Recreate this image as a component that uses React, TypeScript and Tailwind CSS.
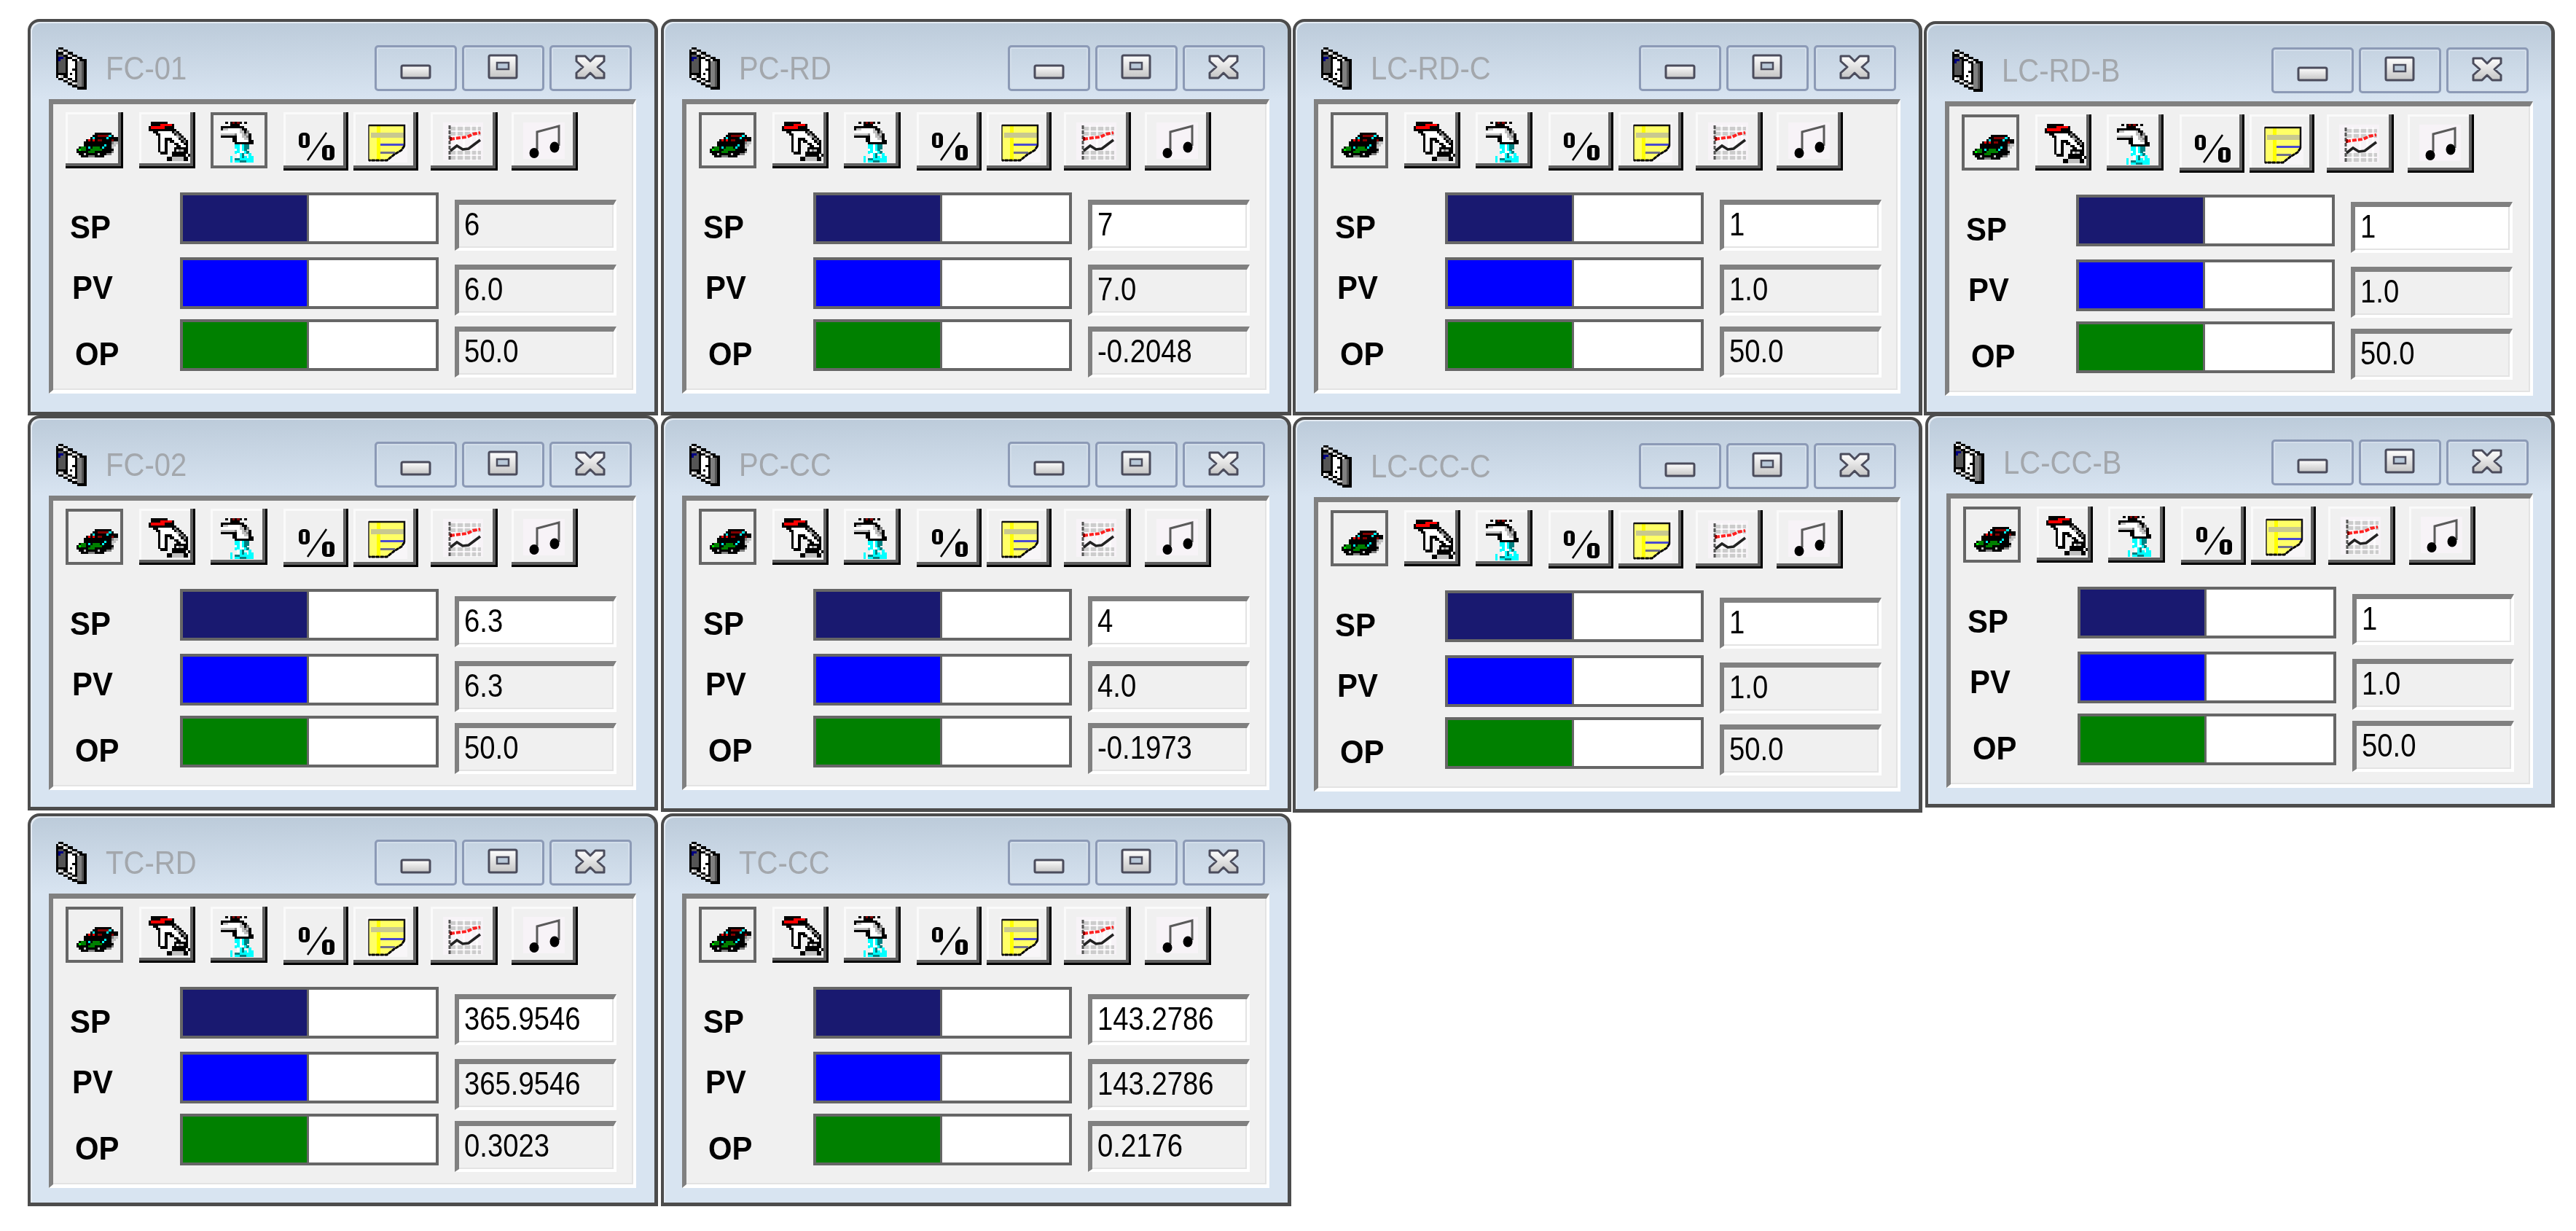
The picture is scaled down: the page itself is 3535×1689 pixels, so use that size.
import React from "react";

const colors: Record<string, string> = {
  k: "#000000", r: "#ff0000", d: "#800000", c: "#00ffff", g: "#008000", G: "#00ff00",
  w: "#ffffff", s: "#c0c0c0", a: "#808080", n: "#000080", e: "#008080", m: "#555555",
};

// little bitmap helper, the toolbar icons are 16 colour bitmaps
const Pix = ({ x, y, cw, ch, rows }: { x: number; y: number; cw: number; ch: number; rows: string[] }) => (
  <g shapeRendering="crispEdges">
    {rows.map((row, j) =>
      row.split("").map((c, i) =>
        colors[c] ? <rect key={`${i}-${j}`} x={x + i * cw} y={y + j * ch} width={cw + 0.3} height={ch + 0.3} fill={colors[c]} /> : null
      )
    )}
  </g>
);

const car = [
  "........kkkkkkk...",
  ".......kkdddddck..",
  "......kckkkkkckkkk",
  "....krkrkddkkkkdkk",
  "...kkkkkkkkkkkkass",
  "...kkkkkkkkkckkss.",
  ".kggkckgggkckkks..",
  "kGggkkgggggkkkkk..",
  "kkkkkgggkkkkkkka..",
  ".kkskkkkkskkkaa...",
  "..kkkaaakkkk......",
];
const hand = [
  ".kkkkkkk..........",
  ".kkkkrrrrrk.......",
  "krrrrrrkkkk.......",
  "kkkkkkkkkkkk......",
  "..kkwwwwwwkak.....",
  "...kkwwwwwwkak....",
  "....kwwwwwwwsak...",
  "....kwwkkkwwwkak..",
  "....kwwk.kkwwwkak.",
  "....kwwk...kkwwkk.",
  "....kwwk....kkwwk.",
  "....kwwk...kkkkkk.",
  "....kwwk...kwaskk.",
  ".....kkk..kkkkkkk.",
  "..........kkkkkkwk",
  "........kkssssskkw",
  "........kkssssskk.",
];
const faucet = [
  "..k.kdkdk.k...",
  "....kkkk......",
  "kkkkkkkkkk....",
  "ksswwwwwskk...",
  "wwwwwwwwsska..",
  "ssssssawwsask.",
  "kkkkkkkwwssak.",
  ".....kkwwwssk.",
  ".....kkwwwwwkk",
  "......kkkkkkkk",
  "......ccwcee..",
  "......ccwcee..",
  "......wcwce...",
  "......ccwwce..",
  ".......wce..c.",
  "....c..wcec.cc",
  "....c.eecccccc",
  "....c.cceeeccc",
];
const doorIcon = [
  ".kk...........",
  "kwskk.........",
  "kkkwskk.......",
  "kmmkkwskk.....",
  "knnmkkkwskk...",
  "knmmkwwkkwkkk.",
  "kmmmkwwwkaamk.",
  "kmmmkwwwkaamk.",
  "kmmmkwwwkaamk.",
  "kmmmkwwkkaamk.",
  "kmmmkwwwkaamk.",
  "kkkkkwkwkaamk.",
  "kwskkwwwkaamk.",
  ".kkwskkwkaamk.",
  "...kkwskkaamk.",
  ".....kkwsaamk.",
  ".......kkaamk.",
  ".........kkkk.",
];

const Car = () => <Pix x={15} y={28} cw={3.17} ch={3.1} rows={car} />;
const Hand = () => <Pix x={13} y={13} cw={3.17} ch={3.17} rows={hand} />;
const Faucet = () => <Pix x={14} y={13} cw={3.2} ch={3.1} rows={faucet} />;

const Percent = () => (
  <g>
    <rect x={21} y={28} width={15} height={21} rx={6} fill="#000" />
    <rect x={26.5} y={32} width={4} height={13} fill="#f0f0f0" />
    <rect x={53} y={45} width={17} height={21} rx={6} fill="#000" />
    <rect x={59.5} y={49} width={4} height={13} fill="#f0f0f0" />
    <path d="M59 28L33 66" stroke="#000" strokeWidth={2.6} />
  </g>
);

const Note = () => (
  <g>
    <rect x={18} y={14} width={56} height={55} fill="#f8f6f8" />
    <path d="M21 18H70V46L66 52L56 58L46 66H21Z" fill="#ffff66" stroke="#222" strokeWidth={1.5} />
    <rect x={32} y={18} width={5} height={48} fill="#ffff00" />
    <rect x={24} y={28} width={45} height={7} fill="#c9c98f" />
    <rect x={37} y={43} width={33} height={3} fill="#4a4ad0" />
    <rect x={37} y={54} width={20} height={3} fill="#70708a" />
    <path d="M21 18H70V46" fill="none" stroke="#111" strokeWidth={2.5} />
    <path d="M70 46L66 52L56 58L46 66H21" fill="none" stroke="#000" strokeWidth={3} strokeDasharray="5 1" />
  </g>
);

const Chart = () => (
  <g>
    <rect x={17} y={14} width={55} height={52} fill="#f7f3f7" />
    {[20, 27, 53, 60].map((y) => (
      <rect key={y} x={25} y={y} width={44} height={5} fill="#cccccc" />
    ))}
    {[34, 44, 54, 62].map((x) => (
      <rect key={x} x={x} y={18} width={3} height={48} fill="#ffffff" opacity={0.7} />
    ))}
    <path d="M26 18V66" stroke="#555" strokeWidth={3} strokeDasharray="5 2" />
    <path d="M27 37L40 35L50 34L58 30L68 28" fill="none" stroke="#ff2020" strokeWidth={4} strokeDasharray="6 2" />
    <path d="M27 53L36 46L44 51L52 50L60 44L68 38" fill="none" stroke="#222" strokeWidth={3.5} />
    <rect x={26} y={34} width={3} height={5} fill="#800000" />
  </g>
);

const Music = () => (
  <g>
    <rect x={16} y={14} width={57} height={50} fill="#f7f3f7" />
    <path d="M35 51V27L65 19V46" fill="none" stroke="#5a5a5a" strokeWidth={3} />
    <ellipse cx={31} cy={56} rx={6.5} ry={7} fill="#000" />
    <ellipse cx={59} cy={48} rx={6.5} ry={7.5} fill="#000" />
  </g>
);

const tools = [
  { icon: <Car />, w: 79, h: 77, cls: "w-[79px] h-[77px]" },
  { icon: <Hand />, w: 77, h: 77, cls: "w-[77px] h-[77px] ml-[22px]" },
  { icon: <Faucet />, w: 78, h: 77, cls: "w-[78px] h-[77px] ml-[21px]" },
  { icon: <Percent />, w: 89, h: 80, cls: "w-[89px] h-[80px] ml-[22px]" },
  { icon: <Note />, w: 89, h: 80, cls: "w-[89px] h-[80px] ml-[7px]" },
  { icon: <Chart />, w: 92, h: 80, cls: "w-[92px] h-[80px] ml-[17px]" },
  { icon: <Music />, w: 91, h: 80, cls: "w-[91px] h-[80px] ml-[19px]" },
];

const rows = [
  { label: "SP", labelCls: "pl-[23px] pt-[25px]", fill: "bg-[#191970]", rowCls: "" },
  { label: "PV", labelCls: "pl-[26px] pt-[19px]", fill: "bg-[#0000ff]", rowCls: "mt-[18px]" },
  { label: "OP", labelCls: "pl-[30px] pt-[25px]", fill: "bg-[#008000]", rowCls: "mt-[14px]" },
];

const TitleButton = ({ children }: { children: React.ReactNode }) => (
  <div className="w-[113px] h-[63px] rounded-[5px] border-[3px] border-[#8c9ab6] shadow-[inset_0_0_0_2px_#d3deea]">
    <svg viewBox="0 0 107 57" className="w-full h-full blur-[0.4px]">
      <defs>
        <linearGradient id="glyph" x1="0" y1="0" x2="0" y2="1">
          <stop offset="0" stopColor="#ffffff" />
          <stop offset="1" stopColor="#c4c4c4" />
        </linearGradient>
      </defs>
      {children}
    </svg>
  </div>
);

type WinProps = {
  title: string;
  pos: string;
  values: string[];
  pressed: number;
  spEditable: boolean;
};

const Win = ({ title, pos, values, pressed, spEditable }: WinProps) => (
  <div className={`absolute ${pos} border-solid border-[#4c4c4c] border-t-[4px] border-l-[4px] border-r-[5px] border-b-[5px] rounded-tl-[16px] rounded-tr-[16px] bg-[linear-gradient(#bccbda,#d8e4f1_106px)] shadow-[inset_2px_2px_0_#e4ebf3]`}>
    {/* title bar */}
    <div className="h-[106px] flex items-start pl-[35px] pr-[31px] pt-[32px]">
      <svg viewBox="0 0 45 58" className="w-[45px] h-[58px] mt-[3px] blur-[0.4px]">
        <Pix x={0} y={0} cw={3.2} ch={3.2} rows={doorIcon} />
      </svg>
      <span className="ml-[23px] mt-[9px] text-[45px] leading-[45px] text-[#a3a7ac] inline-block origin-left scale-x-[.89] font-['Liberation_Sans',sans-serif]">
        {title}
      </span>
      <div className="ml-auto flex gap-[7px]">
        <TitleButton>
          <rect x={34} y={25} width={39} height={17} rx={2} fill="url(#glyph)" stroke="#4b4c5c" strokeWidth={3} />
        </TitleButton>
        <TitleButton>
          <rect x={34} y={11} width={38} height={31} rx={2} fill="url(#glyph)" stroke="#4b4c5c" strokeWidth={3} />
          <rect x={45} y={21} width={16} height={9} fill="#b9c8d8" stroke="#4b4c5c" strokeWidth={2.5} />
        </TitleButton>
        <TitleButton>
          <path d="M34 12H46L53 19L60 12H72V19L63 27L72 35V42H60L53 35L46 42H34V35L43 27L34 19Z" fill="url(#glyph)" stroke="#4b4c5c" strokeWidth={3} strokeLinejoin="round" />
        </TitleButton>
      </div>
    </div>

    {/* client area */}
    <div className="mx-[25px] h-[404px] border-solid border-t-[7px] border-l-[6px] border-r-[4px] border-b-[5px] border-t-[#808080] border-l-[#808080] border-r-white border-b-white bg-[#f0f0f0] shadow-[inset_-2px_-2px_0_#e3e3e3] pl-[17px] pt-[11px] font-['Liberation_Sans',sans-serif]">
      <div className="flex items-start h-[80px]">
        {tools.map((t, i) => (
          <div
            key={i}
            className={
              t.cls +
              (i === pressed
                ? " border-solid border-[4px] border-[#666666]"
                : " shadow-[inset_-3px_-3px_0_#000,inset_-7px_-7px_0_#5f5f5f,inset_3px_3px_0_#fafafa]")
            }
          >
            <svg
              viewBox={i === pressed ? `4 4 ${t.w - 8} ${t.h - 8}` : `0 0 ${t.w} ${t.h}`}
              className="w-full h-full blur-[0.5px]"
            >
              {t.icon}
            </svg>
          </div>
        ))}
      </div>

      <div className="mt-[30px] -ml-[17px]">
        {rows.map((r, i) => {
          const grey = i > 0 || !spEditable;
          return (
            <div key={r.label} className={`flex items-start h-[71px] ${r.rowCls}`}>
              <div className={`w-[174px] ${r.labelCls}`}>
                <span className="block origin-left scale-x-[.93] text-[45px] leading-[45px] font-bold text-black">{r.label}</span>
              </div>
              <div className="flex w-[355px] h-[71px] border-solid border-[4px] border-[#666666] bg-white">
                <div className={`w-[173px] h-full border-solid border-r-[3px] border-[#666666] ${r.fill}`} />
              </div>
              <div
                className={`ml-[22px] mt-[10px] w-[222px] h-[70px] shrink-0 border-solid border-t-[7px] border-l-[6px] border-r-[4px] border-b-[4px] border-t-[#808080] border-l-[#808080] border-r-white border-b-white shadow-[inset_-2px_-2px_0_#e3e3e3] pl-[7px] pt-[5px] ${grey ? "bg-[#f0f0f0]" : "bg-white"}`}
              >
                <span className="block origin-left scale-x-[.87] text-[44px] leading-[44px] text-black whitespace-nowrap">{values[i]}</span>
              </div>
            </div>
          );
        })}
      </div>
    </div>
  </div>
);

const windows: WinProps[] = [
  { title: "FC-01", pos: "left-[38px] top-[26px] w-[865px] h-[544px]", values: ["6", "6.0", "50.0"], pressed: 2, spEditable: false },
  { title: "PC-RD", pos: "left-[907px] top-[26px] w-[865px] h-[544px]", values: ["7", "7.0", "-0.2048"], pressed: 0, spEditable: true },
  { title: "LC-RD-C", pos: "left-[1774px] top-[26px] w-[864px] h-[544px]", values: ["1", "1.0", "50.0"], pressed: 0, spEditable: true },
  { title: "LC-RD-B", pos: "left-[2640px] top-[29px] w-[866px] h-[541px]", values: ["1", "1.0", "50.0"], pressed: 0, spEditable: true },
  { title: "FC-02", pos: "left-[38px] top-[570px] w-[865px] h-[542px]", values: ["6.3", "6.3", "50.0"], pressed: 0, spEditable: true },
  { title: "PC-CC", pos: "left-[907px] top-[570px] w-[865px] h-[544px]", values: ["4", "4.0", "-0.1973"], pressed: 0, spEditable: true },
  { title: "LC-CC-C", pos: "left-[1774px] top-[572px] w-[864px] h-[543px]", values: ["1", "1.0", "50.0"], pressed: 0, spEditable: true },
  { title: "LC-CC-B", pos: "left-[2642px] top-[567px] w-[864px] h-[541px]", values: ["1", "1.0", "50.0"], pressed: 0, spEditable: true },
  { title: "TC-RD", pos: "left-[38px] top-[1116px] w-[865px] h-[539px]", values: ["365.9546", "365.9546", "0.3023"], pressed: 0, spEditable: true },
  { title: "TC-CC", pos: "left-[907px] top-[1116px] w-[865px] h-[539px]", values: ["143.2786", "143.2786", "0.2176"], pressed: 0, spEditable: true },
];

export default function App() {
  return (
    <div className="relative w-[3535px] h-[1689px] bg-white overflow-hidden">
      {windows.map((w) => (
        <Win key={w.title} {...w} />
      ))}
    </div>
  );
}
